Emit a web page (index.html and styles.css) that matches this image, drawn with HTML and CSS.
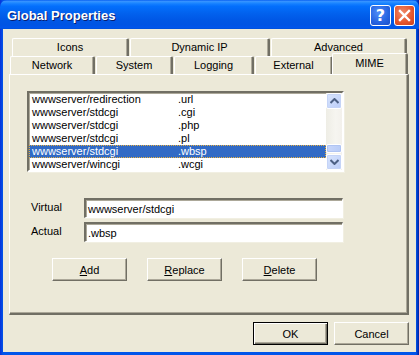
FILE: index.html
```html
<!DOCTYPE html>
<html lang="en">
<head>
    <meta charset="UTF-8">
    <title>Global Properties</title>
    <link rel="stylesheet" href="styles.css">
</head>
<body>
    <div class="window">
        <div class="titlebar">
            <span class="title">Global Properties</span>
            <div class="caption-buttons">
                <div class="cap-btn help">?</div>
                <div class="cap-btn close">
                    <svg width="13" height="13" viewBox="0 0 13 13">
                        <path d="M2 2 L11 11 M11 2 L2 11" stroke="#fff" stroke-width="2.4" stroke-linecap="square"/>
                    </svg>
                </div>
            </div>
        </div>

        <div class="client">
            <div class="tabs">
                <div class="tab-row back-row">
                    <div class="tab tab-icons">Icons</div>
                    <div class="tab tab-dynamic">Dynamic IP</div>
                    <div class="tab tab-advanced">Advanced</div>
                </div>
                <div class="tab-row front-row">
                    <div class="tab tab-network">Network</div>
                    <div class="tab tab-system">System</div>
                    <div class="tab tab-logging">Logging</div>
                    <div class="tab tab-external">External</div>
                    <div class="tab tab-mime active">MIME</div>
                </div>
            </div>

            <div class="panel">
                <div class="listbox">
                    <div class="rows">
                        <div class="row"><span class="col-path">wwwserver/redirection</span><span>.url</span></div>
                        <div class="row"><span class="col-path">wwwserver/stdcgi</span><span>.cgi</span></div>
                        <div class="row"><span class="col-path">wwwserver/stdcgi</span><span>.php</span></div>
                        <div class="row"><span class="col-path">wwwserver/stdcgi</span><span>.pl</span></div>
                        <div class="row selected"><span class="col-path">wwwserver/stdcgi</span><span>.wbsp</span></div>
                        <div class="row"><span class="col-path">wwwserver/wincgi</span><span>.wcgi</span></div>
                    </div>
                    <div class="scrollbar">
                        <div class="sb-btn">
                            <svg width="9" height="6" viewBox="0 0 9 6"><path d="M0.5 5 L4.5 1 L8.5 5" fill="none" stroke="#4d6185" stroke-width="2"/></svg>
                        </div>
                        <div class="sb-track">
                            <div class="sb-thumb"></div>
                        </div>
                        <div class="sb-btn">
                            <svg width="9" height="6" viewBox="0 0 9 6"><path d="M0.5 1 L4.5 5 L8.5 1" fill="none" stroke="#4d6185" stroke-width="2"/></svg>
                        </div>
                    </div>
                </div>

                <div class="fields">
                    <div class="field">
                        <span class="label">Virtual</span>
                        <div class="input">wwwserver/stdcgi</div>
                    </div>
                    <div class="field">
                        <span class="label">Actual</span>
                        <div class="input">.wbsp</div>
                    </div>
                </div>

                <div class="actions">
                    <div class="btn"><u>A</u>dd</div>
                    <div class="btn"><u>R</u>eplace</div>
                    <div class="btn"><u>D</u>elete</div>
                </div>
            </div>

            <div class="footer">
                <div class="btn default">OK</div>
                <div class="btn">Cancel</div>
            </div>
        </div>
    </div>
</body>
</html>
```

FILE: styles.css
```css
body {
    margin: 0;
    background: #ece9d8;
    font-family: 'Liberation Sans', Arial, sans-serif;
    font-size: 11px;
    color: #000;
}

.window {
    width: 419px;
    height: 355px;
    box-sizing: border-box;
    background: linear-gradient(to right, #0831d9, #0055ea 3px, #0055ea 416px, #001ea0);
    padding: 0 3px 3px 3px;
    display: flex;
    flex-direction: column;
}

.titlebar {
    height: 29px;
    margin: 0 -3px;
    padding: 0 4px 0 7px;
    display: flex;
    align-items: center;
    justify-content: space-between;
    background: linear-gradient(to bottom, #0058ee 0%, #3a93ff 4%, #288eff 8%, #127dff 14%, #036ffc 22%, #0262ee 45%, #0057e5 70%, #0054e3 85%, #0055eb 95%, #0050d8 100%);
    border-radius: 7px 7px 0 0;
}

.title {
    color: #fff;
    font-family: 'Liberation Sans', Arial, sans-serif;
    font-weight: bold;
    font-size: 13px;
    text-shadow: 1px 1px 0 #0a1e6e;
    padding-top: 1px;
}

.caption-buttons {
    display: flex;
    gap: 3px;
    padding-top: 2px;
}

.cap-btn {
    width: 19px;
    height: 19px;
    border: 1px solid #fff;
    border-radius: 3px;
    display: flex;
    align-items: center;
    justify-content: center;
    color: #fff;
    font-weight: bold;
    font-size: 16px;
    font-family: 'DejaVu Sans', sans-serif;
}

.help {
    background: radial-gradient(circle at 40% 35%, #4f8ef8, #2663e0 60%, #1b4fc9);
}

.close {
    background: radial-gradient(circle at 40% 35%, #f08a6a, #e3542c 60%, #c8401e);
}

.client {
    flex: 1;
    background: #ece9d8;
    padding: 9px 7px 0 6px;
    display: flex;
    flex-direction: column;
}

/* tabs */
.tabs {
    display: flex;
    flex-direction: column;
}

.tab-row {
    display: flex;
    height: 18px;
}

.back-row {
    padding-left: 3px;
}

.front-row {
    padding-left: 1px;
}

.tab {
    box-sizing: border-box;
    height: 18px;
    border-top: 1px solid #fff;
    border-left: 1px solid #fff;
    border-right: 2px solid #716f64;
    border-radius: 2px 2px 0 0;
    box-shadow: inset -1px 0 0 #aca899;
    display: flex;
    justify-content: center;
    padding-top: 2px;
}

.tab-icons { width: 117px; margin-right: 1px; }
.tab-dynamic { width: 140px; margin-right: 1px; }
.tab-advanced { width: 136px; }

.tab-network { width: 85px; margin-right: 1px; }
.tab-system { width: 77px; margin-right: 1px; }
.tab-logging { width: 80px; margin-right: 1px; }
.tab-external { width: 78px; margin-right: 1px; }

.tab-mime.active {
    width: 76px;
    height: 21px;
    margin-top: -3px;
    margin-left: -2px;
    margin-bottom: -1px;
    padding-top: 3px;
    position: relative;
    z-index: 1;
    background: #ece9d8;
}

.panel {
    height: 241px;
    box-sizing: border-box;
    border-left: 1px solid #fff;
    border-top: 1px solid #fff;
    border-right: 2px solid #716f64;
    border-bottom: 2px solid #716f64;
    box-shadow: inset -1px -1px 0 #aca899;
    padding: 16px 0 0 17px;
    display: flex;
    flex-direction: column;
}

/* list */
.listbox {
    width: 317px;
    height: 81px;
    box-sizing: border-box;
    background: #fff;
    border-top: 2px solid #716f64;
    border-left: 2px solid #716f64;
    border-right: 2px solid #fff;
    border-bottom: 2px solid #fff;
    box-shadow: inset 1px 1px 0 #aca899, 1px 1px 0 #f1efe2;
    display: flex;
}

.rows {
    flex: 1;
}

.row {
    height: 13px;
    line-height: 13px;
    display: flex;
    padding-left: 3px;
    box-sizing: border-box;
    white-space: nowrap;
}

.col-path {
    width: 146px;
}

.row.selected {
    background: #316ac5;
    color: #fff;
    outline: 1px dotted #e8b040;
    outline-offset: -1px;
}

.scrollbar {
    width: 16px;
    display: flex;
    flex-direction: column;
    background: linear-gradient(to right, #eeede5, #f6f5f0 60%, #f3f1ec);
}

.sb-btn {
    height: 16px;
    box-sizing: border-box;
    border: 1px solid #fff;
    border-radius: 2px;
    background: linear-gradient(to bottom right, #d9e5fd, #bbcdf8);
    box-shadow: inset 0 0 0 1px #c5d4f7;
    display: flex;
    align-items: center;
    justify-content: center;
}

.sb-track {
    flex: 1;
    display: flex;
    flex-direction: column;
    justify-content: flex-end;
    padding-bottom: 1px;
}

.sb-thumb {
    height: 7px;
    border: 1px solid #fff;
    border-radius: 2px;
    background: linear-gradient(to right, #c8d6fb, #b8ccf7);
    box-shadow: inset 0 0 0 1px #b0c4f2;
}

/* fields */
.fields {
    margin-top: 26px;
    display: flex;
    flex-direction: column;
    gap: 4px;
}

.field {
    display: flex;
    align-items: center;
}

.label {
    width: 57px;
    padding-left: 4px;
    box-sizing: border-box;
    margin-top: -2px;
}

.input {
    width: 259px;
    height: 20px;
    box-sizing: border-box;
    background: #fff;
    border-top: 2px solid #716f64;
    border-left: 2px solid #716f64;
    border-right: 1px solid #fff;
    border-bottom: 1px solid #fff;
    box-shadow: inset 1px 1px 0 #aca899, 1px 1px 0 #f1efe2;
    padding: 2px 0 0 2px;
    line-height: 14px;
}

/* buttons */
.actions {
    margin-top: 16px;
    padding-left: 25px;
    display: flex;
    gap: 20px;
}

.btn {
    width: 75px;
    height: 23px;
    box-sizing: border-box;
    border-top: 1px solid #fff;
    border-left: 1px solid #fff;
    border-right: 1px solid #716f64;
    border-bottom: 1px solid #716f64;
    box-shadow: inset -1px -1px 0 #aca899;
    display: flex;
    align-items: center;
    justify-content: center;
}

.footer {
    display: flex;
    justify-content: flex-end;
    gap: 6px;
    padding-top: 7px;
}

.btn.default {
    border: 1px solid #000;
    box-shadow: inset 1px 1px 0 #fff, inset -1px -1px 0 #716f64, inset -2px -2px 0 #aca899;
}
```
